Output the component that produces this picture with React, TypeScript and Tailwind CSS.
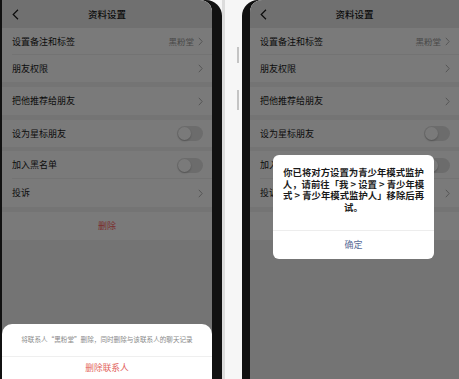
import type { JSX, ReactNode } from 'react';

function ChevronRight(): JSX.Element {
  return (
    <svg width="5" height="9" viewBox="0 0 5 9" fill="none" className="shrink-0">
      <path d="M0.8 0.8L4.2 4.5L0.8 8.2" stroke="#b2b2b2" strokeWidth="1" />
    </svg>
  );
}

function BackIcon(): JSX.Element {
  return (
    <svg width="7" height="11" viewBox="0 0 7 11" fill="none">
      <path d="M6 0.8L1.2 5.5L6 10.2" stroke="#1a1a1a" strokeWidth="1.2" />
    </svg>
  );
}

function Toggle(): JSX.Element {
  return (
    <div className="flex h-[15px] w-[26px] items-center rounded-full bg-[#e2e2e2] p-[1px]">
      <div className="h-[13px] w-[13px] rounded-full bg-white shadow-[0_1px_2px_rgba(0,0,0,0.25)]" />
    </div>
  );
}

function Row({
  label,
  h = 'h-[27px]',
  right,
  divider = false,
}: {
  label: string;
  h?: string;
  right?: ReactNode;
  divider?: boolean;
}): JSX.Element {
  return (
    <div className={`relative flex ${h} items-center justify-between bg-white pl-[10px] pr-[9px]`}>
      <span className="text-[9px] text-[#191919]">{label}</span>
      <div className="flex items-center gap-[4px]">{right}</div>
      {divider && <div className="absolute bottom-0 left-[10px] right-0 h-px bg-[#f0f0f0]" />}
    </div>
  );
}

function SettingsScreen(): JSX.Element {
  return (
    <div className="flex flex-col">
      <div className="grid h-[28px] grid-cols-[1fr_auto_1fr] items-center bg-[#ebebeb] px-[10px]">
        <BackIcon />
        <span className="text-[9.5px] font-medium text-[#191919]">资料设置</span>
        <span />
      </div>
      <Row
        label="设置备注和标签"
        divider
        right={
          <>
            <span className="text-[8.5px] text-[#999]">黑粉堂</span>
            <ChevronRight />
          </>
        }
      />
      <Row label="朋友权限" right={<ChevronRight />} />
      <div className="h-[5px]" />
      <Row label="把他推荐给朋友" h="h-[28px]" right={<ChevronRight />} />
      <div className="h-[5px]" />
      <Row label="设为星标朋友" right={<Toggle />} />
      <div className="h-[4px]" />
      <Row label="加入黑名单" h="h-[28px]" divider right={<Toggle />} />
      <Row label="投诉" h="h-[28px]" right={<ChevronRight />} />
      <div className="h-[5px]" />
      <div className="flex h-[28px] items-center justify-center bg-white">
        <span className="text-[9px] text-[#ff6262]">删除</span>
      </div>
    </div>
  );
}

const dialogLines = [
  '你已将对方设置为青少年模式监护',
  '人，请前往「我 > 设置 > 青少年模',
  '式 > 青少年模式监护人」移除后再',
  '试。',
];

export default function App(): JSX.Element {
  return (
    <div className="flex h-[379px] w-[459px] overflow-hidden bg-[#f6f6f6] font-['Noto_Sans_CJK_SC','Noto_Sans',sans-serif]">
      {/* left phone */}
      <div className="flex w-[222px] rounded-tr-[16px] bg-[#111] pl-[2px] pr-[10px]">
        <div className="relative w-[210px] overflow-hidden rounded-tr-[12px] bg-[#f2f2f2]">
          <SettingsScreen />
          <div className="absolute inset-0 bg-black/[0.52]" />
          <div className="absolute inset-x-0 bottom-0 top-[324px] flex flex-col rounded-t-[10px] bg-white">
            <div className="flex h-[36px] items-center justify-center border-b border-[#efefef]">
              <span className="whitespace-nowrap text-[6.6px] text-[#8a8a8a]">
                将联系人“黑粉堂”删除，同时删除与该联系人的聊天记录
              </span>
            </div>
            <div className="flex h-[24px] items-center justify-center">
              <span className="text-[8.7px] text-[#e25f5c]">删除联系人</span>
            </div>
          </div>
        </div>
      </div>

      {/* gap between phones */}
      <div className="flex w-[20px] flex-col border-l-[3px] border-[#dcdcdc] pl-[12px] pt-[47px]">
        <div className="h-[16px] w-[2px] bg-[#c4c4c4]" />
        <div className="mt-[27px] h-[20px] w-[2px] bg-[#c4c4c4]" />
      </div>

      {/* right phone */}
      <div className="flex w-[217px] rounded-tl-[16px] bg-[#111] pl-[8px]">
        <div className="relative w-[209px] overflow-hidden rounded-tl-[12px] bg-[#f2f2f2]">
          <SettingsScreen />
          <div className="absolute inset-0 bg-black/[0.52]" />
          <div className="absolute left-[23px] top-[155px] flex h-[104px] w-[161px] flex-col rounded-[6px] bg-white">
            <div className="flex h-[75px] flex-col items-center pt-[12px]">
              {dialogLines.map((line) => (
                <div
                  key={line}
                  className="h-[11.5px] whitespace-nowrap text-center text-[9.4px] font-semibold leading-[11.5px] text-[#1a1a1a]"
                >
                  {line}
                </div>
              ))}
            </div>
            <div className="flex flex-1 items-center justify-center border-t border-[#ededed]">
              <span className="text-[9px] text-[#576b95]">确定</span>
            </div>
          </div>
        </div>
      </div>
    </div>
  );
}
